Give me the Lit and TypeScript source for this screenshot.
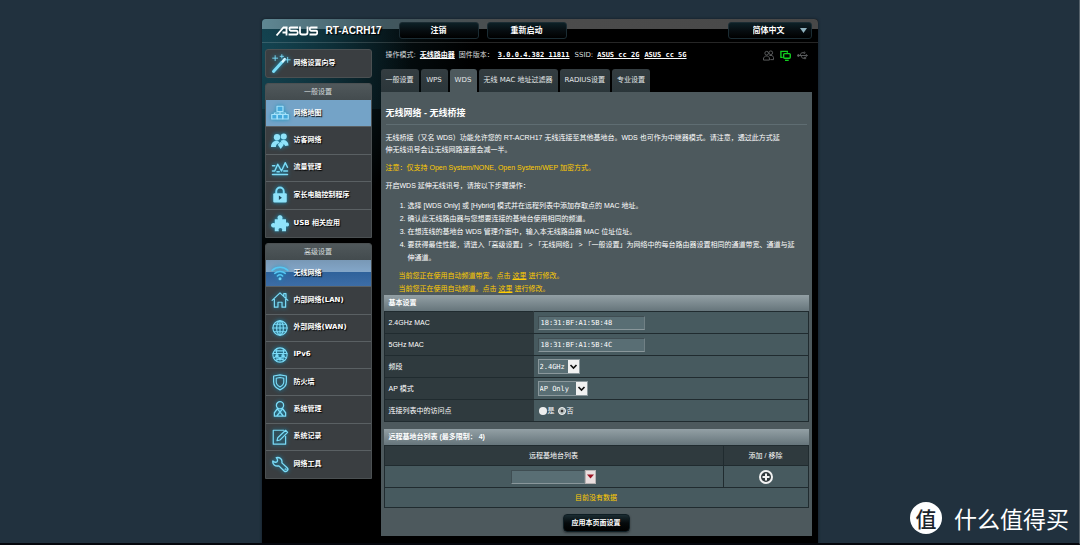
import { LitElement, html, css, svg, nothing } from "lit";
import { customElement, property, state } from "lit/decorators.js";
import { classMap } from "lit/directives/class-map.js";

const ICONS: Record<string, unknown> = {
  wand: svg`<path d="M3 21 13 10" stroke-width="3.6"/><path d="m14.2 8.8 2.3-2.6" stroke-width="3.2" stroke="#d9f8ff"/><path d="M5 2v6M2 5h6M13 .8v4M11 2.8h4M20 4v6M17 7h6" stroke-width="1.1"/>`,
  map: svg`<g stroke-width="1.6"><rect x="8" y="3" width="8" height="7" fill="#43a9dc"/><rect x="1" y="14" width="7" height="6" fill="#43a9dc"/><rect x="8.500" y="14" width="7" height="6" fill="#43a9dc"/><rect x="16" y="14" width="7" height="6" fill="#43a9dc"/><path d="M12 10v4M4.500 14v-2h15v2"/></g>`,
  guests: svg`<g fill="#8fe3fa" stroke="none"><circle cx="8" cy="7" r="4.200"/><circle cx="17" cy="6" r="4"/><path d="M0 20c0-5 3-8.500 7.500-8.500 2 0 3 1 4 3-3 1-5 2-5 5.500zM13 11.500c5-2 10 .5 10.500 6.500l-4.500.5c-1-2-2.500-3-4.500-3z"/><path d="m13 13 4 4-4 5.500-4-5.500z"/></g>`,
  traffic: svg`<path d="M2 20.500h20M2 16h3l4-9 5 9 5-11 3 6M2 9h3M8 17h3M17 16h5" stroke-width="2"/>`,
  lock: svg`<path d="M7 10V7a5 5 0 0 1 10 0v3" stroke-width="2.600"/><rect x="3" y="9.500" width="18" height="12.500" rx="1.500" fill="#8fe3fa" stroke="none"/><path d="m10.500 12.500 4 3-4 3z" fill="#1d4a5e" stroke="none"/>`,
  puzzle: svg`<path d="M5 7h4.500c-2-3 0-5.500 2.500-5.500S16.500 4 14.800 7H20v4.800c3-1.500 4 .4 4 2.200s-1 3.500-4 2.200V23h-5.500c1.400-3-.3-4.300-2-4.300s-3.300 1.300-2 4.300H5v-5.500c-3 1.400-5-.5-5-2.400S2 11 5 12.500z" fill="#8fe3fa" stroke="none"/>`,
  wifi: svg`<path d="M1.500 8.500c6-5.500 15-5.500 21 0M5 12.500c4-3.500 10-3.500 14 0M8.500 16c2-1.800 5-1.800 7 0" stroke-width="2"/><circle cx="12" cy="19.500" r="2" fill="#6fd4f5" stroke="none"/>`,
  home: svg`<path d="M1.500 12.500 12 2.500l10.500 10M17 7V3.500h3v6M4.500 11v10.500h4.800V15h5.400v6.500h4.800V11" stroke-width="1.600"/>`,
  globe: svg`<g stroke-width="1.500"><circle cx="12" cy="12" r="9.500"/><ellipse cx="12" cy="12" rx="4.500" ry="9.500"/><path d="M12 2.500v19M2.500 12h19M4 7h16M4 17h16"/></g>`,
  ipv6: svg`<g stroke-width="1.400"><circle cx="12" cy="12" r="9.500"/><path d="M2.500 10h19M5 6.500h14M8 3.500C7 6 7 8 7.500 10M16 3.500c1 2.500 1 4.500.5 6.500M4 16l4-3 4 4 4-4 4 3M8 13v7M16 13v7M6 19l6-2 6 2"/><circle cx="8" cy="13" r="1.500" fill="#6fd4f5"/><circle cx="16" cy="13" r="1.500" fill="#6fd4f5"/><circle cx="12" cy="17" r="1.500" fill="#6fd4f5"/></g>`,
  shield: svg`<path d="M12 2.500 3.500 4v8c0 5 4 8.500 8.500 10.500 4.500-2 8.500-5.500 8.500-10.500V4z" stroke-width="1.600"/><path d="M12 6 7 7v5c0 3 2 5 5 6.500 3-1.500 5-3.500 5-6.500V7z" stroke-width="1.500"/>`,
  admin: svg`<g stroke-width="1.700"><circle cx="12" cy="7" r="4.800"/><path d="M9 11 4.500 17v4.500h15V17L15 11M9.500 13l2.500 3 2.500-3M8 21l4-5 4 5"/></g>`,
  log: svg`<path d="M17 3H3v18.500h16.500V11" stroke-width="1.600"/><path d="m8 17 1-4 10.500-10 2.700 2.700L12 16z" stroke-width="1.500"/>`,
  tools: svg`<path d="M2.500 8c2 2 4.500 2 5.500 1s1-3.500-1-5.500c4.500-1 8.500 2 7.500 7l7 6.500a2.900 2.900 0 0 1-4 4.200L10.500 14.500C5.500 15.500 1.500 12.500 2.500 8z" stroke-width="1.800"/><circle cx="19.300" cy="19" r=".9" stroke-width="1"/>`,
};

interface NavItem {
  icon: string;
  label: string;
}

@customElement("nav-group")
export class NavGroup extends LitElement {
  static properties = { heading: {}, items: { attribute: false }, look: {} };
  declare heading: string;
  declare items: NavItem[];
  declare look: string;

  static styles = css`
    :host { display: block; }
    .group { background: #3a3e41; border: 1px solid #4b5052; border-radius: 3px 3px 0 0; }
    .wizard { border-radius: 3px; }
    .head {
      margin: 0; line-height: 16px; text-align: center; color: #d4dadb;
      font-size: 7px; font-weight: 400; background: linear-gradient(#50585b, #434b4e);
      border-radius: 2px 2px 0 0;
    }
    .list { display: grid; grid-auto-rows: 1fr; margin: 0; padding: 0; list-style: none; }
    .flat { height: 137px; }
    .deep { height: 218px; }
    .wizard .list { height: 27px; }
    .row { display: grid; border-bottom: 1px solid #5a6063; }
    .row:last-child { border-bottom: 0; }
    .link {
      display: flex; align-items: center; gap: 5px; padding-left: 5px;
      color: #fff; text-decoration: none; font-weight: 700; font-size: 7px;
      white-space: nowrap; text-shadow: 1px 1px 1px #000;
    }
    .flat .on { background: #74a3c7; }
    .deep .on { background: linear-gradient(#7898b6, #83a6c8 45%, #2f629b 48%, #3d6da6); }
    .icon {
      width: 18px; height: 18px; fill: none; stroke: #7bdcf8;
      stroke-linecap: round; stroke-linejoin: round; filter: drop-shadow(0 0 2px #1593bd);
    }
    .flat .on .icon { stroke: #a5e2fb; }
    .deep .on .icon { stroke: #55c8f4; }
    .wizard .icon { width: 20px; height: 20px; }
    .wizard .link { gap: 3px; }
  `;

  render() {
    return html`<div class=${classMap({ group: true, wizard: this.look === "wizard" })}>
      ${this.heading ? html`<h2 class="head">${this.heading}</h2>` : nothing}
      <ul class="list ${this.look}">
        ${this.items.map(
          (item, i) => html`<li class="row">
            <a href="#" class=${classMap({ link: true, on: i === 0 && this.look !== "wizard" })}>
              <svg class="icon" viewBox="0 0 24 24" aria-hidden="true">${ICONS[item.icon]}</svg>${item.label}
            </a>
          </li>`
        )}
      </ul>
    </div>`;
  }
}

@customElement("app-root")
export class AppRoot extends LitElement {
  static styles = css`
    :host {
      display: block; position: relative; box-sizing: border-box; height: 100vh; overflow: hidden;
      background: #21313e; border-bottom: 2px solid #05070d; border-right: 1px solid #56626b;
      padding-top: 19px; color: #fff; font-size: 7px; line-height: 13px;
      font-family: "Liberation Sans", "Noto Sans CJK SC", sans-serif;
    }
    * { box-sizing: border-box; }
    .verdana { font-family: "DejaVu Sans", "Noto Sans CJK SC", sans-serif; }
    .shell {
      width: 100%; max-width: 556px; min-height: 100%; margin: 0 auto; padding: 0 6px 0 3px;
      border-radius: 4px 4px 0 0;
      background:
        linear-gradient(100deg, #16495780, #0000 38%) 0 0 / 100% 90px no-repeat,
        radial-gradient(ellipse 150px 210px at 0 30px, #123f4c, #0000) no-repeat, #000;
      box-shadow: 0 0 3px #101a22;
    }
    .top {
      display: flex; align-items: flex-start; height: 24px; padding: 3px 0 0 11px; margin: 0 -6px 0 -3px;
      border-bottom: 1px solid #ffffff26; border-radius: 4px 4px 0 0;
      background:
        linear-gradient(90deg, #5f8793, #40575f 22%, #4c4c4c 45%, #484848) 0 0 / 100% 10px no-repeat;
    }
    .brand { display: flex; align-items: center; gap: 8px; flex: 0 0 126px; height: 17px; padding-left: 3px; }
    .logo { width: 42px; height: 10px; }
    .model { margin: 0; font: 700 10px/17px "Liberation Sans", sans-serif; white-space: nowrap; text-shadow: 1px 1px 1px #000; }
    .topbtn {
      flex: 0 0 80px; height: 17px; margin-right: 8px; padding: 0; border: 1px solid #1b2c33; border-radius: 3px;
      background: linear-gradient(#0d2026, #060c0f 55%, #000); color: #fff; font: 700 8px/13px "DejaVu Sans", "Noto Sans CJK SC", sans-serif;
    }
    .lang { display: grid; flex: 0 0 84px; margin: 0 6px 0 auto; }
    .lang > * { grid-area: 1 / 1; }
    .lang .topbtn { appearance: none; width: 84px; margin: 0; padding: 0 24px; }
    .tri { place-self: center end; margin-right: 5px; width: 7px; height: 5px; fill: #8fb1bd; pointer-events: none; }
    .body { display: grid; grid-template-columns: 107px minmax(0, 1fr); gap: 9px; padding-top: 6px; }
    .nav { display: flex; flex-direction: column; gap: 5px; }
    .info { display: flex; align-items: center; gap: 4px; height: 13px; padding: 0 4px 0 5px; white-space: nowrap; color: #d8dcdd; }
    .info a { color: #fff; font-weight: 700; }
    .info .mono { padding-right: 1px; }
    .mono { font-family: "DejaVu Sans Mono", "Noto Sans CJK SC", monospace; }
    .status { display: flex; align-items: center; gap: 6px; margin-left: auto; }
    .stat { width: 11px; height: 11px; fill: none; stroke: #606364; stroke-width: 1; }
    .live { stroke: #12cf20; stroke-width: 1.5; }
    .tabs { display: flex; gap: 2px; height: 23px; margin-top: 7px; }
    .tab {
      display: grid; place-items: center; flex: 0 0 auto; padding: 0 5px; min-width: 27px; border-radius: 3px 3px 0 0;
      background: linear-gradient(#343d41, #2b363a); color: #e4e8e9; text-decoration: none; white-space: nowrap;
    }
    .tab:hover, .current { background: #4d595d; }
    .panel { background: #4d595d; padding: 14px 3px 4px; }
    .title { margin: 0 2px; padding-bottom: 3px; font-size: 9px; line-height: 15px; font-weight: 700; border-bottom: 1px solid #5f6d72; }
    .copy { margin: 7px 2px 0; line-height: 12px; }
    .copy + .copy { margin-top: 6px; }
    .note { color: #fc0; }
    .steps { margin: 7px 2px 0; padding-left: 22px; }
    .warn { margin: 5px 15px 0; color: #fc0; }
    .warn a { color: inherit; }
    .tbl { width: 100%; border-collapse: collapse; table-layout: fixed; font-size: 7px; background: #475a5f; }
    .tbl td, .tbl th { border: 1px solid #202b2f; padding: 0 4px; height: 22px; text-align: left; font-weight: 400; line-height: 13px; }
    .tbl caption {
      height: 16px; padding-left: 5px; line-height: 16px; text-align: left; font-weight: 700;
      background: linear-gradient(#93a0a5, #66757b);
    }
    .tbl .lab { width: 149px; background: #2f3a3e; border-right-color: #2f3a3e; }
    .remote { margin-top: 7px; }
    .tbl .colhead { background: #2f3a3e; height: 20px; text-align: center; }
    .tbl .act { width: 85px; }
    .tbl .mid { text-align: center; }
    .tbl .none { color: #fc0; height: 20px; text-align: center; }
    .field {
      display: block; width: 107px; height: 14px; padding: 0 2px; border: 1px solid #3f4d52; border-bottom-color: #8a979b; border-right-color: #708085;
      background: #596e74; color: #fff; font-family: "DejaVu Sans Mono", monospace; font-size: 7px; outline: 0;
    }
    .pick { display: inline-grid; vertical-align: middle; }
    .pick > * { grid-area: 1 / 1; }
    .sel {
      appearance: none; height: 15px; padding: 0 14px 0 1px; border: 1px solid #8b989c; border-radius: 0; background: #596e74;
      color: #fff; font-family: "DejaVu Sans Mono", monospace; font-size: 7px; width: 42px;
    }
    .wide { width: 50px; }
    .arrow { place-self: center end; width: 11px; height: 13px; margin-right: 1px; background: #f1f1f1; fill: none; stroke: #111; stroke-width: 1.6; pointer-events: none; }
    .radios { display: flex; align-items: center; gap: 3px; padding-left: 1px; }
    .radios label { display: flex; align-items: center; gap: 1px; }
    .dot { appearance: none; width: 8px; height: 8px; margin: 0; border-radius: 50%; background: #eee; }
    .dot:checked { background: radial-gradient(circle, #333 0 1px, #eee 2px); border: 1px solid #eee; box-shadow: inset 0 0 0 1px #9aa; }
    .combo { display: inline-flex; vertical-align: middle; }
    .combo .field { width: 74px; }
    .drop { width: 11px; height: 14px; padding: 0; border: 1px solid #b9b3b3; background: #eadfdf; display: grid; place-items: center; }
    .drop svg { width: 7px; height: 5px; fill: #9c1423; }
    .add { display: inline-block; vertical-align: middle; width: 16px; height: 16px; padding: 0; border: 0; background: none; }
    .add svg { display: block; width: 16px; height: 16px; fill: #30393c; stroke: #f2f2f2; stroke-width: 2; }
    .actions { display: flex; justify-content: center; margin-top: 6px; }
    .apply {
      width: 67px; height: 18px; padding: 0; border: 1px solid #0e1d23; border-radius: 4px; color: #fff;
      background: linear-gradient(#1a2c32, #050a0c 50%, #000); font: 700 7px/14px "Liberation Sans", "Noto Sans CJK SC", sans-serif;
      box-shadow: 0 1px 2px #1118; white-space: nowrap;
    }
    .foot { display: flex; justify-content: flex-end; gap: 8px; margin-top: 7px; padding-right: 6px; }
    .find { width: 120px; height: 15px; border: 1px solid #3c3c3c; border-radius: 6px; background: #0a0a0a; color: #fff; }
    .go { width: 12px; height: 12px; padding: 0; border: 1px solid #3c3c3c; border-radius: 50%; background: #0a0a0a; }
    .mark { position: absolute; right: 10px; bottom: 8px; display: flex; align-items: center; gap: 12px; font: 23px/34px "Noto Sans CJK SC", sans-serif; }
    .badge { display: grid; place-items: center; width: 32px; height: 32px; border-radius: 50%; background: #fff; color: #1b242c; font-size: 21px; font-weight: 500; line-height: 32px; }
  `;

  @state() private band = "2.4GHz";
  @state() private tab = 2;

  private general: NavItem[] = [
    { icon: "map", label: "网络地图" },
    { icon: "guests", label: "访客网络" },
    { icon: "traffic", label: "流量管理" },
    { icon: "lock", label: "家长电脑控制程序" },
    { icon: "puzzle", label: "USB 相关应用" },
  ];

  private advanced: NavItem[] = [
    { icon: "wifi", label: "无线网络" },
    { icon: "home", label: "内部网络(LAN)" },
    { icon: "globe", label: "外部网络(WAN)" },
    { icon: "ipv6", label: "IPv6" },
    { icon: "shield", label: "防火墙" },
    { icon: "admin", label: "系统管理" },
    { icon: "log", label: "系统记录" },
    { icon: "tools", label: "网络工具" },
  ];

  private tabs = ["一般设置", "WPS", "WDS", "无线 MAC 地址过滤器", "RADIUS设置", "专业设置"];

  private arrow() {
    return html`<svg class="arrow" viewBox="0 0 11 13" aria-hidden="true"><path d="m2.500 5 3 3 3-3" /></svg>`;
  }

  render() {
    return html`
      <div class="shell">
        <header class="top verdana">
          <div class="brand">
            <svg class="logo" viewBox="0 0 84 20" role="img" aria-label="ASUS" fill="none" stroke="#fff" stroke-width="3.600">
              <path d="M1 19 15 3h8M13 13h10M21 1.500V19" />
              <path d="M44 3H29q-2 0-2 3t2 3.500h12q2.500 0 2.500 3.500t-2.500 4H25" />
              <path d="M48 1v12q0 4 4 4h7q4 0 4-4V1" />
              <path d="M83 3H70q-2.500 0-2.500 3t2.500 3.500h10q2.500 0 2.500 3.500t-2.500 4H67" />
            </svg>
            <h1 class="model">RT-ACRH17</h1>
          </div>
          <button class="topbtn">注销</button>
          <button class="topbtn">重新启动</button>
          <div class="lang">
            <select class="topbtn" aria-label="语言"><option>简体中文</option></select>
            <svg class="tri" viewBox="0 0 7 5" aria-hidden="true"><path d="M0 0h7L3.500 5z" /></svg>
          </div>
        </header>

        <div class="body">
          <nav class="nav verdana">
            <nav-group look="wizard" .items=${[{ icon: "wand", label: "网络设置向导" }]}></nav-group>
            <nav-group look="flat" heading="一般设置" .items=${this.general}></nav-group>
            <nav-group look="deep" heading="高级设置" .items=${this.advanced}></nav-group>
          </nav>

          <main>
            <div class="info verdana">
              <span>操作模式:</span><a href="#">无线路由器</a>
              <span>固件版本：</span><a class="mono" href="#">3.0.0.4.382_11811</a>
              <span>SSID:</span><a class="mono" href="#">ASUS_cc_2G</a><a class="mono" href="#">ASUS_cc_5G</a>
              <div class="status">
                <svg class="stat" viewBox="0 0 12 12"><circle cx="4" cy="3.500" r="2" /><circle cx="8.500" cy="3" r="2" /><path d="M.5 11V8.500L3 6.500h2l2 2V11zM7 6h3l1.500 2v2.500H8" /></svg>
                <svg class="stat live" viewBox="0 0 12 12"><path d="M3 8H1V1.500h7V3" /><rect x="4" y="4" width="7.200" height="5" rx="1" /><path d="M5.500 11.300h4" /></svg>
                <svg class="stat" viewBox="0 0 12 12"><path d="M1 6h9.500M3 6l2-3h2M4 6l2 3h2" /><circle cx="1.500" cy="6" r="1" fill="#606364" /><circle cx="8" cy="3" r=".8" /><path d="M8 8h1.500v1.500H8zM10 5l1.500 1L10 7z" /></svg>
              </div>
            </div>

            <div class="tabs verdana">
              ${this.tabs.map(
                (t, i) => html`<a href="#" class=${classMap({ tab: true, current: i === this.tab })} @click=${() => (this.tab = i)}>${t}</a>`
              )}
            </div>

            <section class="panel">
              <h2 class="title">无线网络 - 无线桥接</h2>
              <p class="copy">
                无线桥接（又名 WDS）功能允许您的 RT-ACRH17 无线连接至其他基地台。WDS 也可作为中继器模式。请注意，透过此方式延<br />伸无线讯号会让无线网路速度会减一半。
              </p>
              <p class="copy note">注意：仅支持 Open System/NONE, Open System/WEP 加密方式。</p>
              <p class="copy">开启WDS 延伸无线讯号，请按以下步骤操作：</p>
              <ol class="steps">
                <li>选择 [WDS Only] 或 [Hybrid] 模式并在远程列表中添加存取点的 MAC 地址。</li>
                <li>确认此无线路由器与您想要连接的基地台使用相同的频道。</li>
                <li>在想连线的基地台 WDS 管理介面中，输入本无线路由器 MAC 位址位址。</li>
                <li>要获得最佳性能，请进入「高级设置」 &gt; 「无线网络」 &gt; 「一般设置」为网络中的每台路由器设置相同的通道带宽、通道与延<br />伸通道。</li>
              </ol>
              <div class="warn">
                当前您正在使用自动频道带宽。点击 <a href="#">这里</a> 进行修改。<br />
                当前您正在使用自动频道。点击 <a href="#">这里</a> 进行修改。
              </div>

              <table class="tbl">
                <caption>基本设置</caption>
                <tr>
                  <th class="lab"><label for="mac2">2.4GHz MAC</label></th>
                  <td><input class="field" id="mac2" readonly value="18:31:BF:A1:5B:48" /></td>
                </tr>
                <tr>
                  <th class="lab"><label for="mac5">5GHz MAC</label></th>
                  <td><input class="field" id="mac5" readonly value="18:31:BF:A1:5B:4C" /></td>
                </tr>
                <tr>
                  <th class="lab"><label for="band">频段</label></th>
                  <td>
                    <span class="pick">
                      <select class="sel" id="band" .value=${this.band} @change=${(e: Event) => (this.band = (e.target as HTMLSelectElement).value)}>
                        <option>2.4GHz</option><option>5GHz</option>
                      </select>${this.arrow()}
                    </span>
                  </td>
                </tr>
                <tr>
                  <th class="lab"><label for="mode">AP 模式</label></th>
                  <td>
                    <span class="pick">
                      <select class="sel wide" id="mode"><option>AP Only</option><option>WDS Only</option><option>Hybrid</option></select>${this.arrow()}
                    </span>
                  </td>
                </tr>
                <tr>
                  <th class="lab">连接列表中的访问点</th>
                  <td>
                    <div class="radios">
                      <label><input class="dot" type="radio" name="link" />是</label>
                      <label><input class="dot" type="radio" name="link" checked />否</label>
                    </div>
                  </td>
                </tr>
              </table>

              <table class="tbl remote">
                <caption>远程基地台列表 (最多限制： 4)</caption>
                <tr>
                  <th class="colhead">远程基地台列表</th>
                  <th class="colhead act">添加 / 移除</th>
                </tr>
                <tr>
                  <td class="mid">
                    <span class="combo">
                      <input class="field" aria-label="远程基地台列表" />
                      <button class="drop" aria-label="选择"><svg viewBox="0 0 7 5"><path d="M0 .5h7L3.500 4.500z" /></svg></button>
                    </span>
                  </td>
                  <td class="mid">
                    <button class="add" aria-label="添加"><svg viewBox="0 0 16 16"><circle cx="8" cy="8" r="6" /><path d="M8 4.500v7M4.500 8h7" /></svg></button>
                  </td>
                </tr>
                <tr><td class="none" colspan="2">目前没有数据</td></tr>
              </table>
              <div class="actions"><button class="apply">应用本页面设置</button></div>
            </section>
            <div class="foot"><input class="find" aria-label="常见问题" /><button class="go" aria-label="搜索"></button></div>
          </main>
        </div>
      </div>
      <div class="mark"><span class="badge">值</span>什么值得买</div>
    `;
  }
}
